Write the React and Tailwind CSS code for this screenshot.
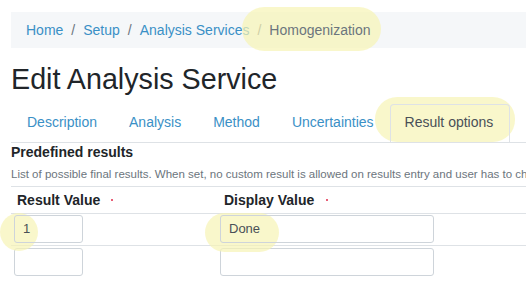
import React from "react";

export default function App() {
  return (
    <div className="w-[526px] h-[282px] overflow-hidden bg-white relative" style={{ fontFamily: '"Liberation Sans", Arial, sans-serif' }}>
      <div className="pl-[11px] pt-[12px]">
        <div className="h-[36px] bg-[#f5f7f9] flex items-center pl-[15px] text-[14px] whitespace-nowrap">
          <span className="text-[#3a90c6]">Home</span>
          <span className="text-[#6c757d] px-[8px]">/</span>
          <span className="text-[#3a90c6]">Setup</span>
          <span className="text-[#6c757d] px-[8px]">/</span>
          <span className="text-[#3a90c6]">Analysis Services</span>
          <span className="text-[#6c757d] px-[8px]">/</span>
          <span className="relative text-[#6c757d]">
            <span className="absolute -left-[27px] -right-[10px] -top-[13px] -bottom-[10px] rounded-full bg-[#f7f3b5]/70"></span>
            <span className="relative">Homogenization</span>
          </span>
        </div>
      </div>
      <h1 className="pl-[11px] mt-[14px] text-[28.7px] leading-[34px] text-[#212529] whitespace-nowrap">Edit Analysis Service</h1>
      <div className="ml-[11px] mt-[8px] border-b border-[#dee2e6] flex text-[14px] whitespace-nowrap h-[39px]">
        <div className="px-[16px] pt-[8px] text-[#3a90c6]">Description</div>
        <div className="px-[16px] pt-[8px] text-[#3a90c6]">Analysis</div>
        <div className="px-[16px] pt-[8px] text-[#3a90c6]">Method</div>
        <div className="px-[16px] pt-[8px] text-[#3a90c6]">Uncertainties</div>
        <div className="relative">
          <span className="absolute -left-[15px] -right-[5px] -top-[7px] bottom-[0px] rounded-[22px] bg-[#f7f3b5]/70"></span>
          <div className="relative h-[39px] px-[14px] pt-[7px] text-[#495057] border border-[#dee2e6] border-b-transparent rounded-t-[4px] w-[120px]">Result options</div>
        </div>
      </div>
      <div className="pl-[11px]">
        <div className="text-[14px] font-bold text-[#212529] leading-[18px]">Predefined results</div>
        <div className="mt-[6px] text-[11.5px] text-[#6c757d] leading-[14px] whitespace-nowrap pb-[5px] border-b border-[#dee2e6]">
          List of possible final results. When set, no custom result is allowed on results entry and user has to choose from these values.
        </div>
        <div className="flex h-[27px] items-center text-[14px] font-bold text-[#212529] border-b border-[#dee2e6]">
          <div className="w-[207px] pl-[6px] flex items-center">Result Value<span className="ml-[11px] w-[2px] h-[2px] bg-[#e0294a] rounded-full"></span></div>
          <div className="pl-[6px] flex items-center">Display Value<span className="ml-[12px] w-[2px] h-[2px] bg-[#e0294a] rounded-full"></span></div>
        </div>
        <div className="flex h-[32px] items-start pt-[1px] border-b border-[#dee2e6] relative">
          <span className="absolute -left-[11px] -top-[1px] w-[38px] h-[38px] rounded-full bg-[#f7f3b5]/70"></span>
          <span className="absolute left-[194px] -top-[1px] w-[74px] h-[39px] rounded-[20px] bg-[#f7f3b5]/70"></span>
          <div className="w-[209px] pl-[3px] relative">
            <div className="w-[69px] h-[28px] border border-[#ced4da] rounded-[3px] text-[13px] text-[#495057] flex items-center pl-[8px]">1</div>
          </div>
          <div className="relative">
            <div className="w-[214px] h-[28px] border border-[#ced4da] rounded-[3px] text-[13px] text-[#495057] flex items-center pl-[8px]">Done</div>
          </div>
        </div>
        <div className="flex pt-[2px]">
          <div className="w-[209px] pl-[3px]">
            <div className="w-[69px] h-[28px] border border-[#ced4da] rounded-[3px]"></div>
          </div>
          <div>
            <div className="w-[214px] h-[28px] border border-[#ced4da] rounded-[3px]"></div>
          </div>
        </div>
      </div>
    </div>
  );
}
